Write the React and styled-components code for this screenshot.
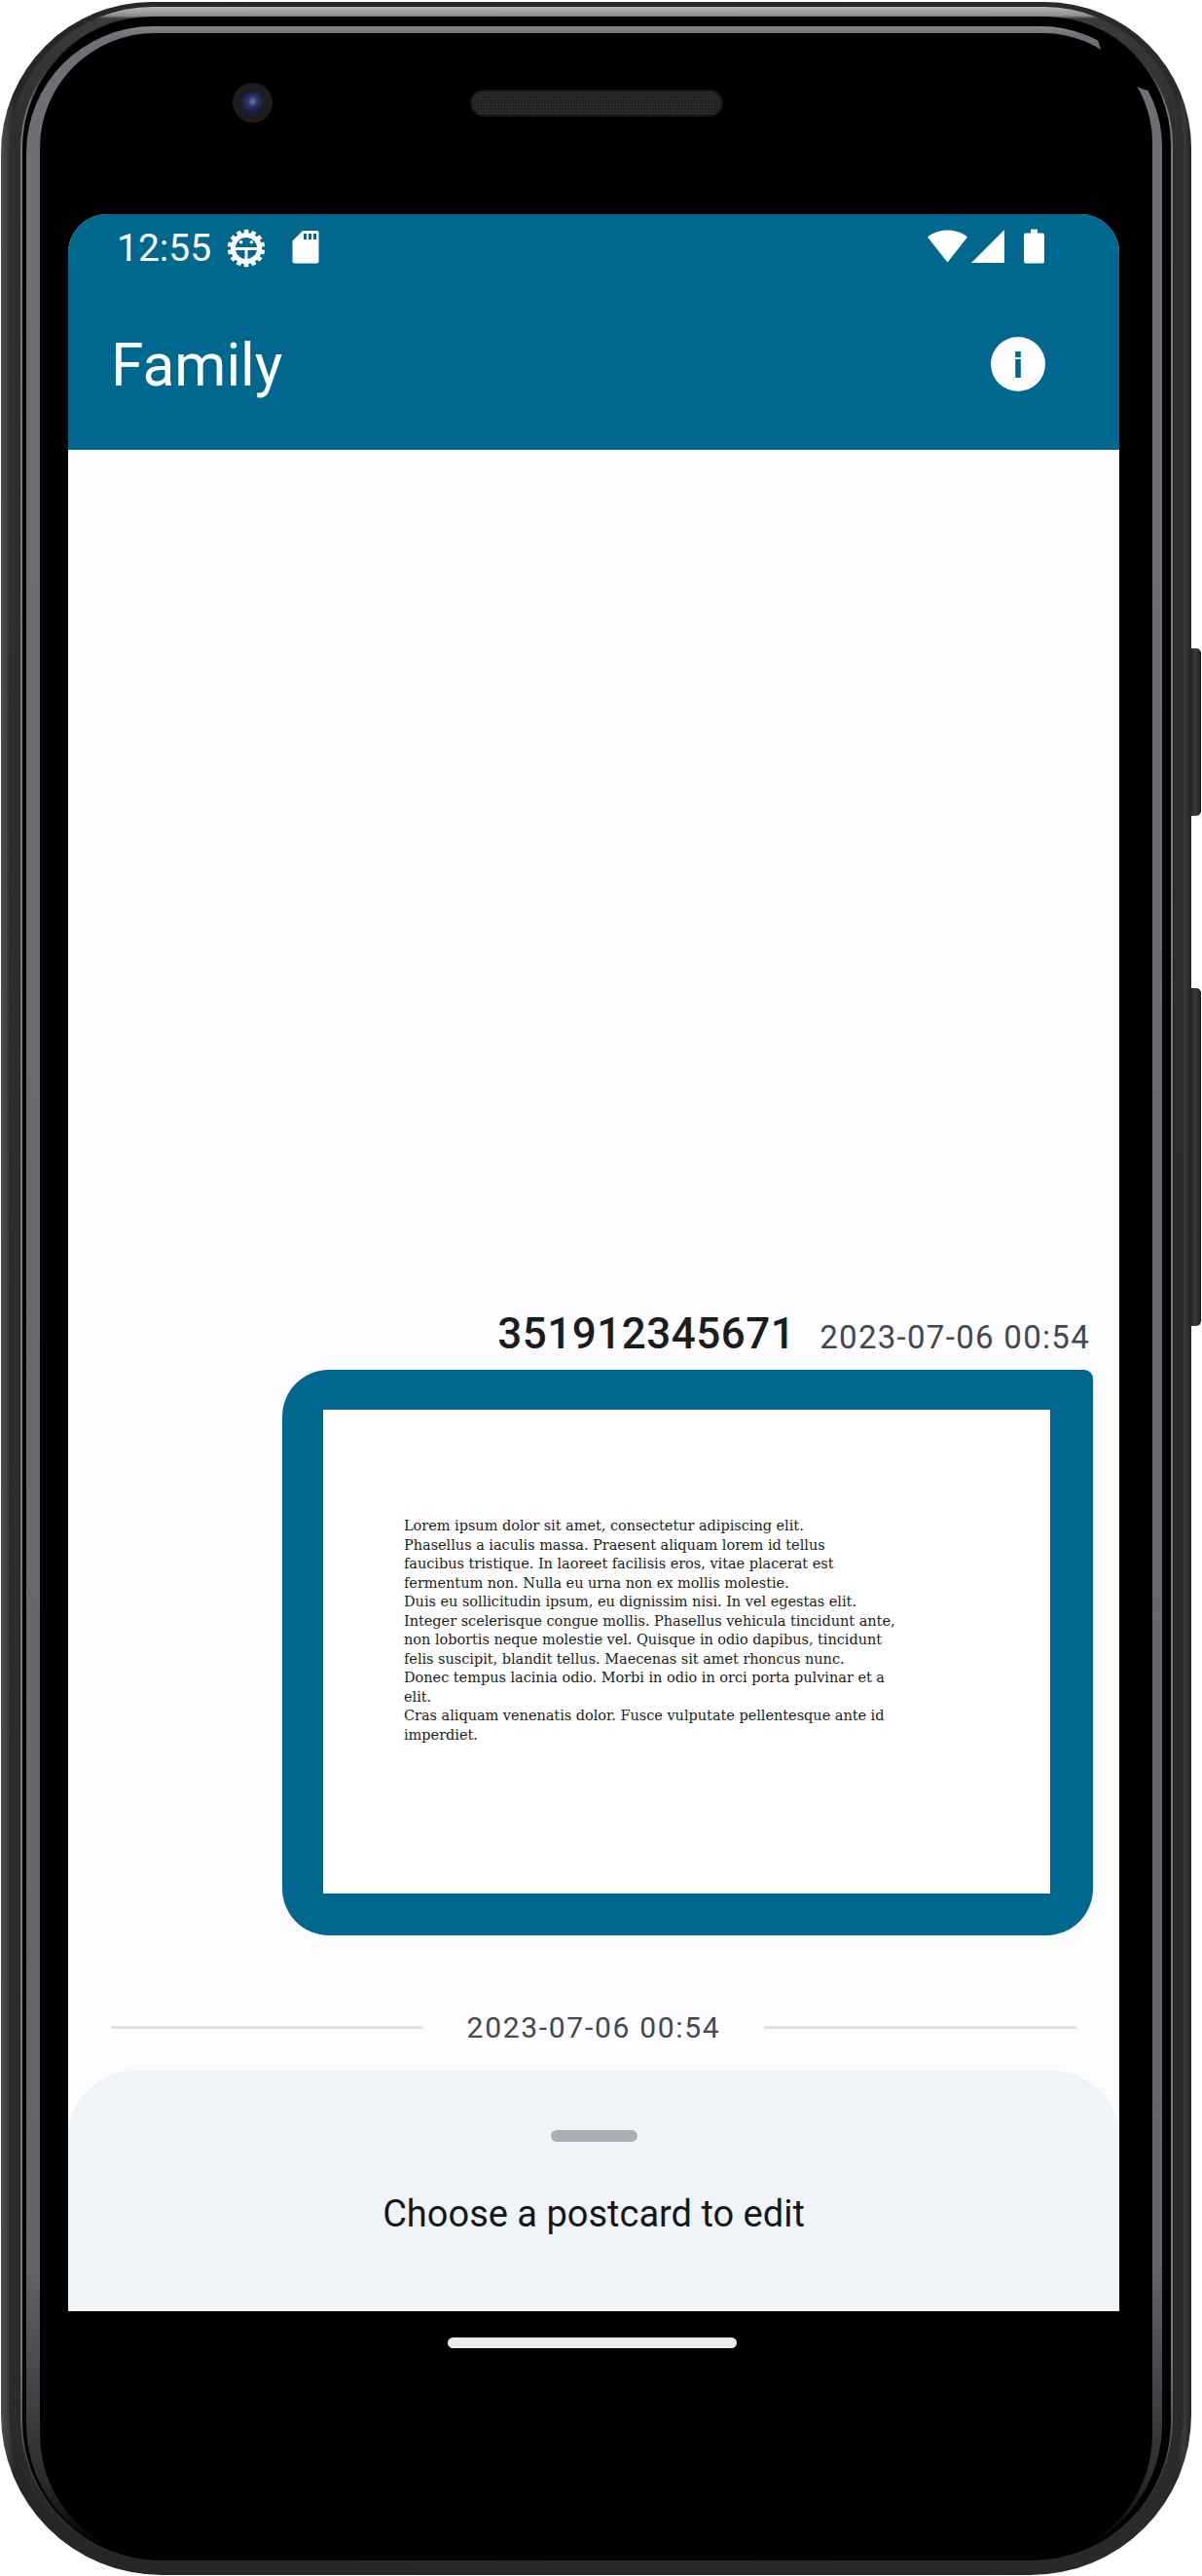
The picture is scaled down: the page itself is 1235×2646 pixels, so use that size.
import React from 'react'
import styled, { createGlobalStyle } from 'styled-components'

const GlobalStyle = createGlobalStyle`
    html, body {
        margin: 0;
        padding: 0;
        background: #fff;
        font-family: Roboto, "Liberation Sans", sans-serif;
    }
`;

const Page = styled.div`
    width: 1235px;
    height: 2646px;
    padding: 2px 0 1px 1px;
    box-sizing: border-box;
    overflow: hidden;
`;

// the phone body is a stack of rings, each one padded inside the last
const Device = styled.div`
    position: relative;
    width: 1223px;
    height: 2643px;
    box-sizing: border-box;
    padding: 5px 8px 15px 8px;
    border-radius: 155px 150px 165px 165px;
    background: linear-gradient(90deg, #4d4d4f 0, #3a3a3b 8px, #262626 14px, #2a2a2a 1209px, #3a3a3b 1216px, #222 100%);
`;

const SideButton = styled.div`
    position: absolute;
    left: 1221px;
    top: ${p => p.$top}px;
    width: 12px;
    height: ${p => p.$height}px;
    border-radius: 0 5px 5px 0;
    background: linear-gradient(90deg, #1e1e1f 0, #3b3b3d 50%, #1b1b1b 100%);
`;

const Band = styled.div`
    height: 100%;
    box-sizing: border-box;
    padding: 10px 11px 0 12px;
    border-radius: 148px 143px 155px 155px;
    background: linear-gradient(180deg, #b4b6ba 0, #8d8f93 9px, #3a3a3c 12px, #2e2e2f 130px, #2a2a2a 100%);
`;

const Line = styled.div`
    height: 100%;
    box-sizing: border-box;
    padding: 1px 2px 0 2px;
    border-radius: 136px 132px 145px 145px;
    background: linear-gradient(180deg, #000 0, #000 20px, #77787a 90px, #77787a 2400px, #222 100%);
`;

const Gap = styled.div`
    height: 100%;
    box-sizing: border-box;
    padding: 9px 9px 0 4px;
    border-radius: 134px 130px 143px 143px;
    background: #000;
`;

const Rim = styled.div`
    height: 100%;
    box-sizing: border-box;
    padding: 7px 10px 0 14px;
    border-radius: 130px 124px 140px 140px;
    background:
        radial-gradient(circle 68px at 100% 0, #000 98%, transparent 100%),
        linear-gradient(180deg, #85878c 0, #6e7075 10px, #63656a 2300px, #2c2c2e 2520px, #000 2590px);
`;

const Face = styled.div`
    height: 100%;
    box-sizing: border-box;
    padding: 0 34px 0 29px;
    border-radius: 118px 112px 130px 130px;
    background: #000;
    display: flex;
    flex-direction: column;
`;

const Sensors = styled.div`
    height: 186px;
    flex: none;
    box-sizing: border-box;
    padding: 58px 0 0 169px;
    display: flex;
    align-items: flex-start;
`;

const Camera = styled.div`
    width: 41px;
    height: 41px;
    margin-top: -7px;
    border-radius: 50%;
    background: #1d1d1f;
    display: flex;
    align-items: center;
    justify-content: center;
`;

const Lens = styled.div`
    width: 23px;
    height: 23px;
    border-radius: 50%;
    background: radial-gradient(circle at 50% 45%, #6f7aa8 0, #2b3566 30%, #141a3c 70%, #050505 100%);
`;

const Speaker = styled.div`
    width: 260px;
    height: 28px;
    margin-left: 203px;
    border-radius: 14px;
    box-sizing: border-box;
    border: 2px solid #161616;
    background-color: #232323;
    background-image: radial-gradient(#3c3c3c 0.7px, transparent 1px);
    background-size: 3px 3px;
`;

const Screen = styled.div`
    height: 2154px;
    flex: none;
    display: flex;
    flex-direction: column;
    background: #fcfcff;
    border-radius: 40px 40px 0 0;
    overflow: hidden;
`;

const Header = styled.header`
    height: 242px;
    flex: none;
    background: #00678f;
    color: #fff;
`;

const StatusBar = styled.div`
    height: 66px;
    box-sizing: border-box;
    padding: 0 77px 0 50px;
    display: flex;
    align-items: center;
`;

const Clock = styled.span`
    font-size: 39px;
    line-height: 1;
    margin: 5px 16px 0 0;
`;

const Spacer = styled.div`
    flex: 1;
`;

const Toolbar = styled.div`
    height: 176px;
    box-sizing: border-box;
    padding: 0 76px 0 44px;
    display: flex;
    align-items: center;
    justify-content: space-between;
`;

const Title = styled.h1`
    margin: 5px 0 0;
    font-size: 60.5px;
    font-weight: 400;
    line-height: 1;
`;

const Messages = styled.main`
    flex: 1;
    min-height: 0;
    display: flex;
    flex-direction: column;
    justify-content: flex-end;
`;

const MessageMeta = styled.div`
    display: flex;
    justify-content: flex-end;
    align-items: baseline;
    gap: 25px;
    padding-right: 30px;
    margin-bottom: 10px;
`;

const Sender = styled.span`
    font-size: 44px;
    font-weight: 500;
    letter-spacing: 0.5px;
    color: #1a1c1e;
    line-height: 1.2;
`;

const Stamp = styled.span`
    font-size: 33px;
    letter-spacing: 1.3px;
    color: #44474e;
`;

const Postcard = styled.div`
    width: 833px;
    height: 581px;
    box-sizing: border-box;
    margin: 0 27px 0 auto;
    padding: 41px 44px 43px 42px;
    background: #00678f;
    border-radius: 48px 9px 48px 48px;
`;

const PostcardPaper = styled.div`
    height: 100%;
    box-sizing: border-box;
    padding: 110px 0 0 83px;
    background: #fff;
`;

const PostcardLine = styled.div`
    font-family: "DejaVu Serif", "Liberation Serif", serif;
    font-size: 14.5px;
    line-height: 19.5px;
    letter-spacing: -0.03px;
    white-space: nowrap;
    color: #1c1c1c;
`;

const DateDivider = styled.div`
    display: flex;
    align-items: center;
    justify-content: space-between;
    padding: 0 44px;
    margin: 70px 0 21px;
    height: 48px;
`;

const DividerRule = styled.div`
    width: 321px;
    height: 3px;
    background: #e1e2e5;
`;

const DividerText = styled.span`
    font-size: 30px;
    letter-spacing: 1.7px;
    color: #44474e;
`;

const Sheet = styled.section`
    height: 247px;
    flex: none;
    box-sizing: border-box;
    padding-top: 61px;
    background: #eff4f8;
    border-radius: 68px 68px 0 0;
    display: flex;
    flex-direction: column;
    align-items: center;
`;

const Handle = styled.div`
    width: 89px;
    height: 12px;
    border-radius: 6px;
    background: #a9afb7;
`;

const SheetText = styled.div`
    margin-top: 49px;
    font-size: 38px;
    line-height: 50px;
    color: #15181b;
`;

const NavArea = styled.div`
    display: flex;
    justify-content: center;
    padding-top: 27px;
`;

const HomePill = styled.div`
    width: 297px;
    height: 11px;
    margin-right: 3px;
    border-radius: 6px;
    background: #ececec;
`;

const Glyph = styled.svg`
    display: block;
    flex: none;
    margin-right: ${p => p.$gap || 0}px;
`;

const teeth = Array.from({ length: 14 }, (_, i) => (360 / 14) * i);

const DebugIcon = () => (
    <Glyph width="40" height="40" viewBox="0 0 40 40" $gap={27} style={{ marginTop: 4 }}>
        {teeth.map(a => (
            <rect key={a} x="17.7" y="0.8" width="4.6" height="6" fill="#fff" transform={`rotate(${a} 20 20)`} />
        ))}
        <circle cx="20" cy="20" r="13.6" fill="none" stroke="#fff" strokeWidth="5" />
        <rect x="7" y="19" width="26" height="3" fill="#fff" />
        <rect x="18.5" y="20" width="3" height="13" fill="#fff" />
        <circle cx="14.6" cy="13.8" r="1.8" fill="#fff" />
        <circle cx="25.4" cy="13.8" r="1.8" fill="#fff" />
    </Glyph>
);

const SdIcon = () => (
    <Glyph width="28" height="35" viewBox="0 0 28 35">
        <path d="M11 1H25.5A2 2 0 0 1 27.5 3V32.5A2 2 0 0 1 25.5 34.500H2.500A2 2 0 0 1 0.500 32.500V11.500Z" fill="#fff" />
        <path d="M12 4h3v6h-3zM17 4h3v6h-3zM22 4h3v6h-3z" fill="#00678f" />
    </Glyph>
);

const WifiIcon = () => (
    <Glyph width="41" height="34" viewBox="0 0 41 34" $gap={4}>
        <path d="M20.500 33.500L0 7.500C5.500 2.800 12.500 0.500 20.500 0.500S35.500 2.800 41 7.500Z" fill="#fff" />
    </Glyph>
);

const SignalIcon = () => (
    <Glyph width="34" height="34" viewBox="0 0 34 34" $gap={20}>
        <path d="M0 34L34 0V34Z" fill="#fff" />
    </Glyph>
);

const BatteryIcon = () => (
    <Glyph width="21" height="36" viewBox="0 0 21 36">
        <path d="M7 0.500H14V4.500H19A2 2 0 0 1 21 6.500V33.500A2 2 0 0 1 19 35.500H2A2 2 0 0 1 0 33.500V6.500A2 2 0 0 1 2 4.500H7Z" fill="#fff" />
    </Glyph>
);

const InfoIcon = () => (
    <Glyph width="56" height="56" viewBox="0 0 56 56">
        <circle cx="28" cy="28" r="28" fill="#fcfcff" />
        <rect x="25.200" y="15" width="5.600" height="6" fill="#00678f" />
        <rect x="25.200" y="23" width="5.600" height="19" fill="#00678f" />
    </Glyph>
);

const postcardLines = [
    'Lorem ipsum dolor sit amet, consectetur adipiscing elit.',
    'Phasellus a iaculis massa. Praesent aliquam lorem id tellus',
    'faucibus tristique. In laoreet facilisis eros, vitae placerat est',
    'fermentum non. Nulla eu urna non ex mollis molestie.',
    'Duis eu sollicitudin ipsum, eu dignissim nisi. In vel egestas elit.',
    'Integer scelerisque congue mollis. Phasellus vehicula tincidunt ante,',
    'non lobortis neque molestie vel. Quisque in odio dapibus, tincidunt',
    'felis suscipit, blandit tellus. Maecenas sit amet rhoncus nunc.',
    'Donec tempus lacinia odio. Morbi in odio in orci porta pulvinar et a',
    'elit.',
    'Cras aliquam venenatis dolor. Fusce vulputate pellentesque ante id',
    'imperdiet.',
];

export default function App() {
    return (
        <Page>
            <GlobalStyle />
            <Device>
                <SideButton $top={664} $height={172} />
                <SideButton $top={1013} $height={347} />
                <Band>
                    <Line>
                        <Gap>
                            <Rim>
                                <Face>
                                    <Sensors>
                                        <Camera><Lens /></Camera>
                                        <Speaker />
                                    </Sensors>
                                    <Screen>
                                        <Header>
                                            <StatusBar>
                                                <Clock>12:55</Clock>
                                                <DebugIcon />
                                                <SdIcon />
                                                <Spacer />
                                                <WifiIcon />
                                                <SignalIcon />
                                                <BatteryIcon />
                                            </StatusBar>
                                            <Toolbar>
                                                <Title>Family</Title>
                                                <InfoIcon />
                                            </Toolbar>
                                        </Header>
                                        <Messages>
                                            <MessageMeta>
                                                <Sender>351912345671</Sender>
                                                <Stamp>2023-07-06 00:54</Stamp>
                                            </MessageMeta>
                                            <Postcard>
                                                <PostcardPaper>
                                                    {postcardLines.map(line => (
                                                        <PostcardLine key={line}>{line}</PostcardLine>
                                                    ))}
                                                </PostcardPaper>
                                            </Postcard>
                                            <DateDivider>
                                                <DividerRule />
                                                <DividerText>2023-07-06 00:54</DividerText>
                                                <DividerRule />
                                            </DateDivider>
                                        </Messages>
                                        <Sheet>
                                            <Handle />
                                            <SheetText>Choose a postcard to edit</SheetText>
                                        </Sheet>
                                    </Screen>
                                    <NavArea>
                                        <HomePill />
                                    </NavArea>
                                </Face>
                            </Rim>
                        </Gap>
                    </Line>
                </Band>
            </Device>
        </Page>
    );
}
